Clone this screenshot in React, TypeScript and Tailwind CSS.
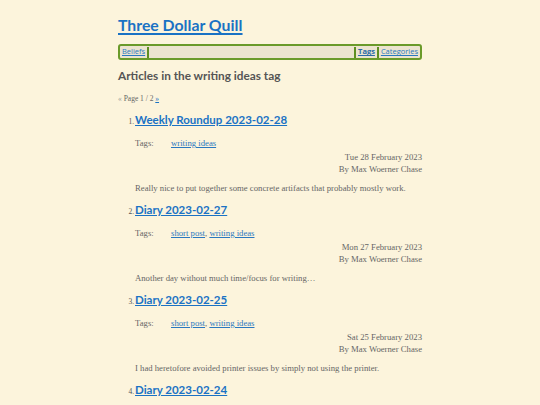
const POSTS = [
  {
    title: 'Weekly Roundup 2023-02-28',
    tags: ['writing ideas'],
    date: 'Tue 28 February 2023',
    summary: 'Really nice to put together some concrete artifacts that probably mostly work.',
  },
  {
    title: 'Diary 2023-02-27',
    tags: ['short post', 'writing ideas'],
    date: 'Mon 27 February 2023',
    summary: 'Another day without much time/focus for writing…',
  },
  {
    title: 'Diary 2023-02-25',
    tags: ['short post', 'writing ideas'],
    date: 'Sat 25 February 2023',
    summary: 'I had heretofore avoided printer issues by simply not using the printer.',
  },
  {
    title: 'Diary 2023-02-24',
    tags: ['short post', 'writing ideas'],
    date: 'Fri 24 February 2023',
    summary: '',
  },
]

const sans = "font-['Lato',sans-serif]"
const navSans = "font-['Open_Sans',sans-serif]"
const serif = "font-['Liberation_Serif',serif]"

function Sep() {
  return <span className="inline-block w-[2px] h-[11px] bg-[#5f8f22] mx-[2px]" />
}

export default function App() {
  return (
    <div className="min-h-[405px] bg-[#fcf4dc] text-[#555]">
      <div className="w-[304px] mx-auto pt-[12px]">
        {/* Site title */}
        <h1 className={`${sans} text-[15.8px] font-bold leading-[26px] text-[#1a72c4] underline decoration-[1.5px] underline-offset-2`}>
          <a href="#">Three Dollar Quill</a>
        </h1>

        {/* Menu */}
        <nav className={`${navSans} mt-[6px] h-[16px] flex items-center px-[2px] bg-[#ece4cf] border-2 border-[#6a9a2a] rounded-[3px] text-[7.5px]`}>
          <a href="#" className="text-[#2a78c0] underline">Beliefs</a>
          <Sep />
          <div className="flex-1" />
          <Sep />
          <a href="#" className="text-[#2a6aa8] underline font-bold">Tags</a>
          <Sep />
          <a href="#" className="text-[#2a78c0] underline">Categories</a>
        </nav>

        <h2 className={`${sans} mt-[7px] text-[11.8px] font-bold leading-[18px] text-[#555]`}>
          Articles in the writing ideas tag
        </h2>

        <p className={`${serif} mt-[9px] text-[7.5px] leading-[10px] text-[#666]`}>
          <span className="text-[#999]">«</span> Page 1 / 2{' '}
          <a href="#" className="text-[#1a72c4] underline">»</a>
        </p>

        <ol className="mt-[7px]">
          {POSTS.map((post, i) => (
            <li key={post.title} className="mb-[7px]">
              <div className="flex items-baseline">
                <span className={`${serif} w-[17px] text-right pr-[1px] text-[7.5px] text-[#555]`}>{i + 1}.</span>
                <a href="#" className={`${sans} text-[11.5px] font-bold leading-[18px] text-[#1a72c4] underline`}>
                  {post.title}
                </a>
              </div>
              <div className={`${serif} pl-[17px] text-[8.7px] text-[#666]`}>
                <div className="mt-[9px] flex leading-[11px]">
                  <span className="w-[36px]">Tags:</span>
                  <span>
                    {post.tags.map((tag, j) => (
                      <span key={tag}>
                        <a href="#" className="text-[#2a78c0] underline">{tag}</a>
                        {j < post.tags.length - 1 && ', '}
                      </span>
                    ))}
                  </span>
                </div>
                <div className="mt-[2px] text-right leading-[12px]">
                  <div>{post.date}</div>
                  <div>By Max Woerner Chase</div>
                </div>
                <p className="mt-[8px] leading-[11px]">{post.summary}</p>
              </div>
            </li>
          ))}
        </ol>
      </div>
    </div>
  )
}
